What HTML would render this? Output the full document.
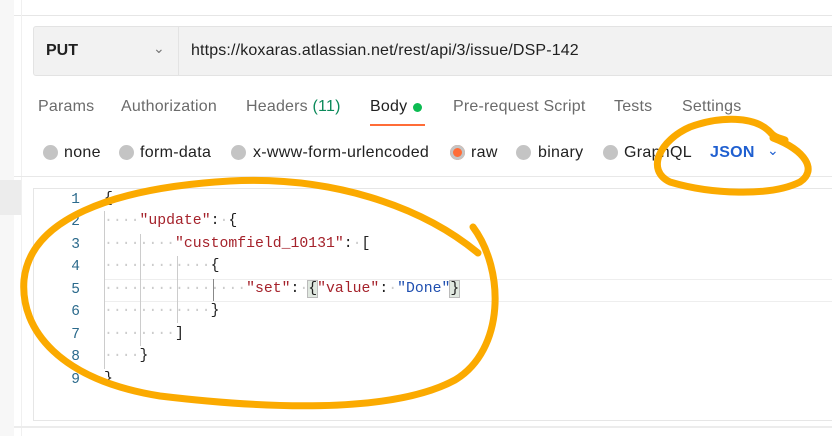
<!DOCTYPE html>
<html><head><style>
body{margin:0;width:832px;height:436px;overflow:hidden;background:#fff;font-family:"Liberation Sans",sans-serif;position:relative}
.a{position:absolute}
.tab{position:absolute;top:98px;font-size:16px;color:#6b6b6b;letter-spacing:0.2px}
.opt{position:absolute;top:144px;font-size:16px;color:#212121;letter-spacing:0.3px}
.dot{position:absolute;top:145px;width:15px;height:15px;border-radius:50%;background:#c4c4c4}
.code{position:absolute;left:104px;font-family:"Liberation Mono",monospace;font-size:14.8px;white-space:pre;color:#212121}
.ln{position:absolute;left:60px;width:20px;text-align:right;font-family:"Liberation Mono",monospace;font-size:14.5px;color:#2b6a8c}
.k{color:#a5222b}.s{color:#1f4fb0}.w{color:#ccc}
</style></head><body>
<div class="a" style="left:0;top:0;width:14px;height:436px;background:#f7f7f7"></div>
<div class="a" style="left:0;top:180px;width:22px;height:35px;background:#ececec"></div>
<div class="a" style="left:14px;top:15px;width:818px;height:1px;background:#e6e6e6"></div>
<div class="a" style="left:21px;top:0;width:1px;height:436px;background:#f0f0f0"></div>
<div class="a" style="left:33px;top:26px;width:800px;height:48px;background:#f2f2f2;border:1px solid #e3e3e3;border-radius:3px"></div>
<div class="a" style="left:178px;top:27px;width:1px;height:48px;background:#e3e3e3"></div>
<div class="a" style="left:46px;top:42px;font-size:16px;font-weight:bold;color:#212121">PUT</div>
<div class="a" style="left:153px;top:40px;font-size:14px;color:#777">&#8964;</div>
<div class="a" style="left:191px;top:42px;font-size:16px;color:#212121;letter-spacing:0.15px">https://koxaras.atlassian.net/rest/api/3/issue/DSP-142</div>
<div class="tab" style="left:38px">Params</div>
<div class="tab" style="left:121px">Authorization</div>
<div class="tab" style="left:246px">Headers <span style="color:#0b8a5a">(11)</span></div>
<div class="tab" style="left:370px;color:#212121">Body</div>
<div class="a" style="left:413px;top:103px;width:9px;height:9px;border-radius:50%;background:#0cbb52"></div>
<div class="a" style="left:370px;top:124px;width:55px;height:2px;background:#ff6c37"></div>
<div class="tab" style="left:453px">Pre-request Script</div>
<div class="tab" style="left:614px">Tests</div>
<div class="tab" style="left:682px">Settings</div>
<div class="dot" style="left:43px"></div><div class="opt" style="left:64px">none</div>
<div class="dot" style="left:119px"></div><div class="opt" style="left:140px">form-data</div>
<div class="dot" style="left:231px"></div><div class="opt" style="left:253px">x-www-form-urlencoded</div>
<div class="dot" style="left:450px;background:#ff6c37;box-shadow:inset 0 0 0 3px #c4c4c4"></div><div class="opt" style="left:471px">raw</div>
<div class="dot" style="left:516px"></div><div class="opt" style="left:538px">binary</div>
<div class="dot" style="left:603px"></div><div class="opt" style="left:624px">GraphQL</div>
<div class="opt" style="left:710px;color:#1f5fd0;font-weight:bold">JSON</div>
<div class="a" style="left:767px;top:142px;font-size:14px;color:#1f5fd0">&#8964;</div>
<div class="a" style="left:14px;top:176px;width:818px;height:1px;background:#e8e8e8"></div>
<div class="a" style="left:33px;top:188px;width:800px;height:231px;border:1px solid #e6e6e6;border-right:none"></div>
<div class="a" style="left:14px;top:426px;width:818px;height:2px;background:#ececec"></div>
<div class="a" style="left:104px;top:279px;width:728px;height:21px;border-top:1px solid #eee;border-bottom:1px solid #eee"></div>
<div class="a" style="left:104px;top:211px;width:1px;height:158px;background:#ccc"></div>
<div class="a" style="left:140px;top:234px;width:1px;height:112px;background:#ccc"></div>
<div class="a" style="left:177px;top:256px;width:1px;height:67px;background:#ccc"></div>
<div class="a" style="left:213px;top:279px;width:1px;height:22px;background:#888"></div>
<div class="ln" style="top:192px">1</div><div class="ln" style="top:214px">2</div><div class="ln" style="top:237px">3</div><div class="ln" style="top:259px">4</div><div class="ln" style="top:282px">5</div><div class="ln" style="top:304px">6</div><div class="ln" style="top:327px">7</div><div class="ln" style="top:349px">8</div><div class="ln" style="top:372px">9</div>
<div class="code" style="top:191px">{</div>
<div class="code" style="top:213px"><span class="w">····</span><span class="k">"update"</span>:<span class="w">·</span>{</div>
<div class="code" style="top:236px"><span class="w">········</span><span class="k">"customfield_10131"</span>:<span class="w">·</span>[</div>
<div class="code" style="top:258px"><span class="w">············</span>{</div>
<div class="code" style="top:281px"><span class="w">················</span><span class="k">"set"</span>:<span class="w">·</span><span style="background:#e0e8e0;outline:1px solid #bbb">{</span><span class="k">"value"</span>:<span class="w">·</span><span class="s">"Done"</span><span style="background:#e0e8e0;outline:1px solid #bbb">}</span></div>
<div class="code" style="top:303px"><span class="w">············</span>}</div>
<div class="code" style="top:326px"><span class="w">········</span>]</div>
<div class="code" style="top:348px"><span class="w">····</span>}</div>
<div class="code" style="top:371px">}</div>
<svg class="a" style="left:0;top:0" width="832" height="436" fill="none" stroke="#fbaa00" stroke-width="7" stroke-linecap="round">
<path d="M473 227 C505 270 505 350 455 380 C390 415 260 408 160 396 C60 380 20 330 24 280 C30 220 110 188 230 181 C330 176 420 205 478 253"/>
<path d="M773 138 C805 150 818 170 800 182 C770 197 710 194 670 182 C645 170 660 140 690 127 C720 116 755 116 770 132 C775 138 780 138 785 140"/>
</svg>
</body></html>
